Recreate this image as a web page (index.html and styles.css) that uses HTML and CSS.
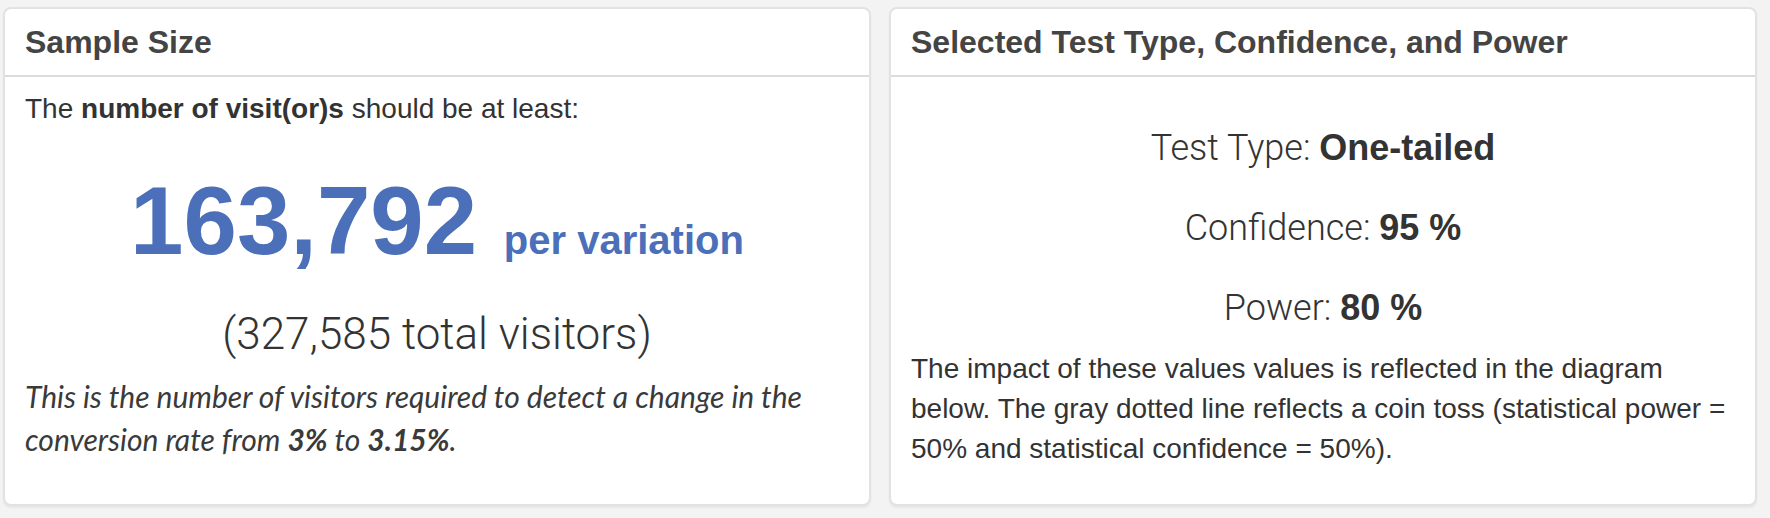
FILE: index.html
```html
<!DOCTYPE html>
<html lang="en">
<head>
<meta charset="utf-8">
<title>Sample Size</title>
<link rel="stylesheet" href="styles.css">
</head>
<body>
<div class="row">
  <section class="card">
    <header class="card-head">Sample Size</header>
    <div class="card-body">
      <p class="intro">The <b>number of visit(or)s</b> should be at least:</p>
      <p class="big">163,792 <span class="per">per variation</span></p>
      <p class="total">(327,585 total visitors)</p>
      <p class="note">This is the number of visitors required to detect a change in the conversion rate from <b>3%</b> to <b>3.15%</b>.</p>
    </div>
  </section>
  <section class="card">
    <header class="card-head">Selected Test Type, Confidence, and Power</header>
    <div class="card-body right">
      <p class="stat">Test Type: <b>One-tailed</b></p>
      <p class="stat">Confidence: <b>95 %</b></p>
      <p class="stat last">Power: <b>80 %</b></p>
      <p class="desc">The impact of these values values is reflected in the diagram below. The gray dotted line reflects a coin toss (statistical power = 50% and statistical confidence = 50%).</p>
    </div>
  </section>
</div>
</body>
</html>
```

FILE: styles.css
```css
* { box-sizing: border-box; }
html, body { margin: 0; padding: 0; }
body {
  background: #f3f3f3;
  font-family: "Liberation Sans", Arial, sans-serif;
  color: #333;
  width: 1770px;
  height: 518px;
  overflow: hidden;
}
p { margin: 0; }
.row {
  display: flex;
  gap: 18px;
  padding: 7px 0 0 3px;
}
.card {
  width: 868px;
  height: 499px;
  background: #fff;
  border: 2px solid #e2e2e2;
  border-radius: 8px;
  box-shadow: 0 2px 2px rgba(0,0,0,0.05);
}
.card-head {
  height: 68px;
  line-height: 66px;
  padding: 0 20px;
  border-bottom: 2px solid #dcdcdc;
  font-size: 32px;
  font-weight: bold;
  color: #444;
}
.card-body {
  padding: 12px 20px 0;
}
.intro {
  font-size: 28px;
  line-height: 40px;
}
.big {
  margin-top: 44px;
  text-align: center;
  font-size: 96px;
  line-height: 96px;
  font-weight: bold;
  color: #4b6fb9;
}
.per {
  font-size: 40px;
}
.total {
  margin-top: 20px;
  text-align: center;
  font-family: Roboto, "Liberation Sans", sans-serif;
  font-weight: 300;
  font-size: 44px;
  line-height: 52px;
  color: #333;
}
.note {
  margin-top: 15px;
  font-family: Lato, "Open Sans", sans-serif;
  font-style: italic;
  font-weight: 400;
  font-size: 30px;
  line-height: 43px;
  color: #3a3a3a;
}
.note b { font-weight: bold; }
.right { padding-top: 49px; }
.stat {
  text-align: center;
  font-family: Roboto, "Liberation Sans", sans-serif;
  font-weight: 300;
  font-size: 36px;
  line-height: 44px;
  margin-bottom: 36px;
}
.stat b {
  font-family: "Liberation Sans", Arial, sans-serif;
  font-weight: bold;
}
.stat.last { margin-bottom: 0; }
.desc {
  margin-top: 19px;
  font-size: 28px;
  line-height: 40px;
}
```
